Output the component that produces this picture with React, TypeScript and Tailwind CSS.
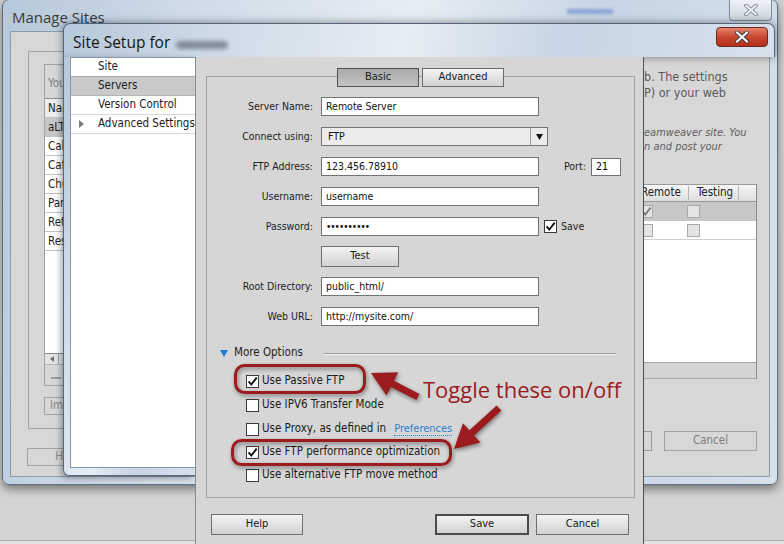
import React from "react";

const ui = "font-['DejaVu_Sans_Condensed','DejaVu_Sans',sans-serif]";
const title = "font-['Open_Sans',sans-serif]";
const glass =
  "bg-[linear-gradient(100deg,#b6c8da_0%,#cfdbe8_22%,#e6edf4_48%,#c7d5e4_70%,#d6e1ec_100%)]";

function Check({ on, dim }: { on?: boolean; dim?: boolean }) {
  return (
    <span
      className={`flex h-[13px] w-[13px] shrink-0 items-center justify-center border ${
        dim ? "border-[#a9a9a9] bg-[#e4e4e4]" : "border-[#3a3a3a] bg-white"
      }`}
    >
      {on && (
        <svg width="11" height="11" viewBox="0 0 11 11">
          <path d="M1.6 5.4 L4.3 8.6 L9.7 1.6" fill="none" stroke={dim ? "#7a7a7a" : "#111"} strokeWidth="1.9" />
        </svg>
      )}
    </span>
  );
}

function CloseX({ size = 14 }: { size?: number }) {
  return (
    <svg width={size} height={size - 2} viewBox="0 0 14 12">
      <path d="M2 1.5 L12 10.5 M12 1.5 L2 10.5" stroke="#3b3b3b" strokeWidth="4" strokeLinecap="round" />
      <path d="M2 1.5 L12 10.5 M12 1.5 L2 10.5" stroke="#fff" strokeWidth="2.2" strokeLinecap="round" />
    </svg>
  );
}

function Field({ label, children }: { label: string; children: React.ReactNode }) {
  return (
    <div className="flex h-[19px] items-center">
      <span className="w-[114px] pr-[8px] text-right text-[10.5px] text-[#1e1e1e]">{label}</span>
      {children}
    </div>
  );
}

function TextBox({ value, w }: { value: string; w: string }) {
  return (
    <div className={`flex h-[19px] items-center border border-[#737373] bg-white px-[4px] text-[10.5px] text-[#111] ${w}`}>
      {value}
    </div>
  );
}

function Btn({ label, strong, w }: { label: string; strong?: boolean; w: string }) {
  return (
    <div
      className={`flex h-[21px] items-center justify-center bg-[linear-gradient(#f3f3f3,#d2d2d2)] text-[11px] text-[#1a1a1a] ${w} ${
        strong ? "border-2 border-[#4b4b4b]" : "border border-[#6f6f6f]"
      }`}
    >
      {label}
    </div>
  );
}

function Option({ label, on, children }: { label: string; on?: boolean; children?: React.ReactNode }) {
  return (
    <div className="flex h-[16px] items-center pl-[39px]">
      <Check on={on} />
      <span className="ml-[3px] text-[11.5px] text-[#1a1a1a]">{label}</span>
      {children}
    </div>
  );
}

function arrow(tip: [number, number], tail: [number, number], shaft = 7, headLen = 24, headW = 26) {
  const dx = tail[0] - tip[0];
  const dy = tail[1] - tip[1];
  const len = Math.hypot(dx, dy);
  const ux = dx / len;
  const uy = dy / len;
  const nx = -uy;
  const ny = ux;
  const bx = tip[0] + ux * headLen;
  const by = tip[1] + uy * headLen;
  const pts = [
    tip,
    [bx + (nx * headW) / 2, by + (ny * headW) / 2],
    [bx + (nx * shaft) / 2, by + (ny * shaft) / 2],
    [tail[0] + (nx * shaft) / 2, tail[1] + (ny * shaft) / 2],
    [tail[0] - (nx * shaft) / 2, tail[1] - (ny * shaft) / 2],
    [bx - (nx * shaft) / 2, by - (ny * shaft) / 2],
    [bx - (nx * headW) / 2, by - (ny * headW) / 2],
  ];
  return pts.map((p) => p.join(",")).join(" ");
}

const sites = ["Name", "aLTsite", "Cabin", "Cafe", "Church", "Parish", "Retreat", "Resort"];

function ManageSites() {
  return (
    <div className={`absolute left-[2px] top-[-1px] flex h-[486px] w-[776px] flex-col rounded-[7px] border border-[#5f6f80] shadow-[0_4px_10px_rgba(0,0,0,0.45)] ${glass}`}>
      <div className="flex h-[31px] items-start justify-between">
        <span className={`pl-[9px] pt-[6px] text-[15px] text-[#3a3a3a] ${title}`}>Manage Sites</span>
        <div className="flex items-start gap-[116px] pr-[5px]">
          <div className="flex flex-col gap-[13px] pt-[9px] blur-[1.5px]">
            <span className="h-[5px] w-[46px] bg-[#8ea4d6]" />
            <span className="h-[4px] w-[40px] bg-[#a3b6dc]" />
          </div>
          <div className="flex h-[21px] w-[43px] items-center justify-center rounded-b-[4px] border border-t-0 border-[#7d8b99] bg-[linear-gradient(#eef2f6,#ccd5de)]">
            <svg width="14" height="12" viewBox="0 0 14 12">
              <path d="M2 1.5 L12 10.5 M12 1.5 L2 10.5" stroke="#6c7580" strokeWidth="3.6" strokeLinecap="round" />
              <path d="M2 1.5 L12 10.5 M12 1.5 L2 10.5" stroke="#f4f6f8" strokeWidth="2" strokeLinecap="round" />
            </svg>
          </div>
        </div>
      </div>
      <div className={`mx-[7px] flex h-[446px] border border-[#8d9aa8] bg-[#d7d7d7] ${ui}`}>
        <div className="w-[633px] shrink-0 pl-[17px] pt-[19px]">
          <div className="h-[378px] w-[600px] border border-[#a3a3a3] pl-[15px] pt-[12px]">
            <div className="flex h-[322px] w-[570px] flex-col border border-[#a3a3a3]">
              <span className="px-[3px] pt-[10px] text-[11.5px] text-[#7d7d7d]">Your sites</span>
              <div className="mt-[6px] flex h-[256px] flex-col border-y border-[#8c8c8c] bg-white">
                {sites.map((s, i) => (
                  <div
                    key={s}
                    className={`flex h-[19px] items-center border-b border-[#c4c4c4] px-[3px] text-[11.5px] text-[#1e1e1e] ${
                      i === 0 ? "bg-[#ececec]" : i === 1 ? "bg-[#c6c6c6]" : ""
                    }`}
                  >
                    {s}
                  </div>
                ))}
              </div>
              <div className="flex h-[11px] items-center border-b border-[#b5b5b5] bg-[#e3e3e3]">
                <span className="flex h-[11px] w-[14px] items-center justify-center border-r border-[#a5a5a5]">
                  <svg width="4" height="6" viewBox="0 0 4 6">
                    <path d="M4 0 V6 L0 3 Z" fill="#6d6d6d" />
                  </svg>
                </span>
              </div>
              <span className="ml-[6px] mt-[12px] h-[2px] w-[10px] bg-[#9b9b9b]" />
            </div>
            <div className="mt-[11px] flex h-[18px] w-[80px] items-center border border-[#a3a3a3] pl-[5px] text-[11.5px] text-[#8a8a8a]">Import</div>
          </div>
          <div className="-ml-[1px] mt-[19px] flex h-[18px] w-[80px] items-center justify-center border border-[#a3a3a3] text-[11.5px] text-[#8a8a8a]">Help</div>
        </div>
        <div className="flex flex-1 flex-col pt-[37px]">
          <p className="text-[12.5px] leading-[16px] text-[#5a5a5a]">b. The settings</p>
          <p className="text-[12.5px] leading-[16px] text-[#5a5a5a]">P) or your web</p>
          <p className="mt-[25px] whitespace-nowrap text-[11px] italic leading-[14px] text-[#5f5f5f]">eamweaver site. You</p>
          <p className="whitespace-nowrap text-[11px] italic leading-[14px] text-[#5f5f5f]">n and post your</p>
          <div className="mt-[30px] flex h-[195px] w-[113px] flex-col border-r border-[#8c8c8c]">
            <div className="flex h-[18px] items-center border-y border-[#9a9a9a] bg-[linear-gradient(#f6f6f6,#dedede)] text-[11.5px] text-[#222]">
              <span className="-ml-[3px] w-[47px]">Remote</span>
              <span className="h-[14px] w-[1px] bg-[#b5b5b5]" />
              <span className="w-[49px] pl-[8px]">Testing</span>
              <span className="h-[14px] w-[1px] bg-[#b5b5b5]" />
            </div>
            <div className="flex h-[19px] items-center bg-[#c7c7c7]">
              <span className="-ml-[4px]"><Check on dim /></span>
              <span className="ml-[34px]"><Check dim /></span>
            </div>
            <div className="flex h-[19px] items-center border-b border-[#cfcfcf] bg-white">
              <span className="-ml-[4px]"><Check dim /></span>
              <span className="ml-[34px]"><Check dim /></span>
            </div>
            <div className="flex-1 bg-white" />
            <div className="h-[17px] border-y border-[#a8a8a8] bg-[#d4d4d4]" />
          </div>
          <div className="mt-[52px] flex items-center gap-[12px]">
            <span className="h-[20px] w-[8px] border-y border-r border-[#9a9a9a]" />
            <div className="flex h-[20px] w-[93px] items-center justify-center border border-[#a3a3a3] text-[11.5px] text-[#7d7d7d]">Cancel</div>
          </div>
        </div>
      </div>
    </div>
  );
}

function SiteSetup() {
  return (
    <div className="absolute left-[63px] top-[23px] flex h-[530px] w-[712px] flex-col">
      <div className={`flex h-[34px] items-start justify-between rounded-t-[7px] border border-b-0 border-[#53657a] shadow-[0_0_8px_rgba(0,0,0,0.45)] ${glass}`}>
        <div className="flex items-center pl-[9px] pt-[7px]">
          <span className={`text-[15.5px] text-[#151515] ${title}`}>Site Setup for</span>
          <span className="ml-[6px] mt-[4px] h-[8px] w-[52px] rounded-full bg-[#7f8b97] blur-[2px]" />
        </div>
        <div className="mr-[6px] mt-[3px] flex h-[20px] w-[52px] items-center justify-center rounded-[4px] border border-[#6b2a1e] bg-[linear-gradient(#e7836c,#c8472f_50%,#b3301b)]">
          <CloseX />
        </div>
      </div>
      <div className={`flex flex-1 ${ui}`}>
        <div className={`h-[419px] w-[132px] shrink-0 rounded-bl-[6px] border-l border-b border-[#56687c] pb-[7px] pl-[6px] shadow-[-2px_2px_6px_rgba(0,0,0,0.35)] ${glass}`}>
          <div className="flex h-full flex-col border border-r-0 border-[#8596a8] bg-white text-[11.5px] text-[#1c1c1c]">
            <div className="flex h-[19px] items-center border-b border-[#a9a9a9] pl-[27px]">Site</div>
            <div className="flex h-[19px] items-center border-b border-[#b5b5b5] bg-[#c9c9c9] pl-[27px]">Servers</div>
            <div className="flex h-[19px] items-center border-b border-[#d6d6d6] pl-[27px]">Version Control</div>
            <div className="flex h-[19px] items-center border-b border-[#d6d6d6] pl-[8px]">
              <svg className="mr-[14px] shrink-0" width="5" height="8" viewBox="0 0 5 8">
                <path d="M0 0 L5 4 L0 8 Z" fill="#7d7d7d" />
              </svg>
              <span>Advanced Settings</span>
            </div>
          </div>
        </div>
        <div className="flex w-[449px] shrink-0 flex-col border-x border-l-[#8a8a8a] border-r-[#4f4f4f] bg-[#d6d6d6]">
          <div className="ml-[10px] mr-[8px] mt-[19px] flex h-[422px] flex-col border border-[#a2a2a2]">
            <div className="-mt-[9px] flex justify-center gap-[3px]">
              <div className="flex h-[19px] w-[82px] items-center justify-center border border-[#505050] bg-[linear-gradient(#a9a9a9,#c4c4c4)] text-[11px] text-[#1a1a1a]">Basic</div>
              <div className="flex h-[19px] w-[82px] items-center justify-center border border-[#6a6a6a] bg-[linear-gradient(#f3f3f3,#d3d3d3)] text-[11px] text-[#1a1a1a]">Advanced</div>
            </div>
            <div className="mt-[10px] flex flex-col gap-[11px]">
              <Field label="Server Name:">
                <TextBox value="Remote Server" w="w-[218px]" />
              </Field>
              <Field label="Connect using:">
                <div className="flex h-[19px] w-[227px] items-center border border-[#737373] bg-[#ececec] text-[10.5px] text-[#111]">
                  <span className="flex-1 pl-[6px]">FTP</span>
                  <span className="flex h-full w-[17px] items-center justify-center border-l border-[#9a9a9a]">
                    <svg width="7" height="6" viewBox="0 0 7 6">
                      <path d="M0 0 H7 L3.5 6 Z" fill="#111" />
                    </svg>
                  </span>
                </div>
              </Field>
              <Field label="FTP Address:">
                <TextBox value="123.456.78910" w="w-[218px]" />
                <span className="ml-[25px] text-[10.5px] text-[#1e1e1e]">Port:</span>
                <div className="ml-[5px] flex h-[18px] w-[30px] items-center border border-[#737373] bg-white px-[4px] text-[10.5px]">21</div>
              </Field>
              <Field label="Username:">
                <TextBox value="username" w="w-[218px]" />
              </Field>
              <Field label="Password:">
                <div className="flex h-[19px] w-[218px] items-center border border-[#737373] bg-white px-[4px] text-[10px] tracking-[-1px] text-[#111]">••••••••••</div>
                <span className="ml-[5px]"><Check on /></span>
                <span className="ml-[4px] text-[10.5px] text-[#1e1e1e]">Save</span>
              </Field>
              <div className="flex h-[19px] items-center pl-[114px]">
                <Btn label="Test" w="w-[78px]" />
              </div>
              <Field label="Root Directory:">
                <TextBox value="public_html/" w="w-[218px]" />
              </Field>
              <Field label="Web URL:">
                <TextBox value="http://mysite.com/" w="w-[218px]" />
              </Field>
            </div>
            <div className="mt-[20px] flex h-[14px] items-center pl-[13px] pr-[18px]">
              <svg width="8" height="7" viewBox="0 0 8 7">
                <path d="M0 0 H8 L4 7 Z" fill="#2178d0" />
              </svg>
              <span className="ml-[6px] text-[11.5px] text-[#1e1e1e]">More Options</span>
              <span className="ml-[21px] h-[1px] flex-1 bg-[#9c9c9c] shadow-[0_1px_0_#f2f2f2]" />
            </div>
            <div className="mt-[13px] flex flex-col gap-[8px]">
              <Option label="Use Passive FTP" on />
              <Option label="Use IPV6 Transfer Mode" />
              <Option label="Use Proxy, as defined in">
                <span className="ml-[8px] border-b border-dotted border-[#2d7fd1] text-[11px] leading-[13px] text-[#2d7fd1]">Preferences</span>
              </Option>
              <div className="-mt-[1px]">
                <Option label="Use FTP performance optimization" on />
              </div>
              <div className="-mt-[1px]">
                <Option label="Use alternative FTP move method" />
              </div>
            </div>
          </div>
          <div className="mt-[16px] flex items-center pl-[15px] pr-[14px]">
            <Btn label="Help" w="w-[92px]" />
            <div className="flex-1" />
            <Btn label="Save" strong w="w-[94px]" />
            <div className="ml-[7px]">
              <Btn label="Cancel" w="w-[93px]" />
            </div>
          </div>
        </div>
      </div>
    </div>
  );
}

function Annotations() {
  return (
    <>
      <svg className="pointer-events-none absolute left-0 top-0 drop-shadow-[1px_2px_2px_rgba(0,0,0,0.45)]" width="784" height="544">
        <rect x="235.5" y="365.5" width="129" height="27" rx="9" fill="none" stroke="#9b1b1f" strokeWidth="3" />
        <rect x="232.5" y="440.5" width="218" height="24" rx="9" fill="none" stroke="#9b1b1f" strokeWidth="3" />
        <polygon points={arrow([371, 373], [418, 397])} fill="#9b1b1f" />
        <polygon points={arrow([454, 449], [499, 408])} fill="#9b1b1f" />
      </svg>
      <span className={`pointer-events-none absolute left-[423px] top-[376px] whitespace-nowrap text-[22px] leading-[26px] text-[#9b1b1f] ${title}`}>
        Toggle these on/off
      </span>
    </>
  );
}

export default function App() {
  return (
    <div className="relative h-[544px] w-[784px] overflow-hidden bg-[#d3d3d3]">
      <div className="absolute bottom-0 left-0 h-[4px] w-full border-t border-[#adadad] bg-[#e2e2e2]" />
      <ManageSites />
      <SiteSetup />
      <Annotations />
    </div>
  );
}
